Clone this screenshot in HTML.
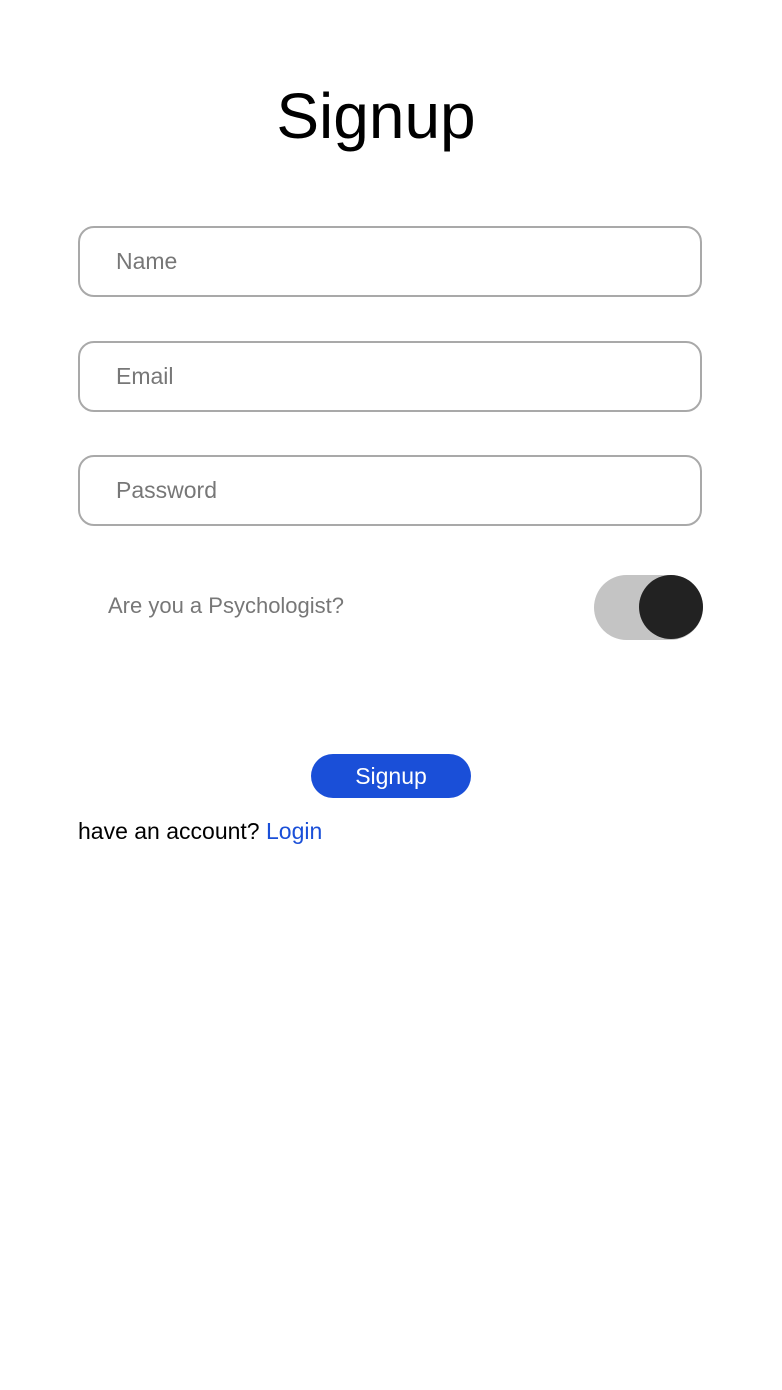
<!DOCTYPE html>
<html><head><style>
body{margin:0;width:782px;height:1390px;background:#fff;font-family:"Liberation Sans",sans-serif;position:relative;overflow:hidden}
.t{position:absolute;left:0;width:752px;text-align:center;top:76px;font-size:64px;color:#000;line-height:80px}
.in{position:absolute;left:78px;width:620px;height:67px;border:2px solid #a9a9a9;border-radius:16px;box-sizing:content-box}
.in span{position:absolute;left:36px;top:0;line-height:67px;font-size:23px;color:#777}
.lab{position:absolute;left:108px;top:592px;font-size:22px;color:#777;line-height:28px}
.track{position:absolute;left:594px;top:575px;width:109px;height:65px;border-radius:33px;background:#c4c4c4}
.knob{position:absolute;left:639px;top:575px;width:64px;height:64px;border-radius:50%;background:#222}
.btn{position:absolute;left:311px;top:754px;width:160px;height:44px;border-radius:22px;background:#1a4fd8;color:#fff;text-align:center;line-height:44px;font-size:23px}
.acc{position:absolute;left:78px;top:817px;font-size:23px;line-height:28px;color:#000}
.acc b{font-weight:normal;color:#1a4fd8}
</style></head><body>
<div class="t">Signup</div>
<div class="in" style="top:226px"><span>Name</span></div>
<div class="in" style="top:341px"><span>Email</span></div>
<div class="in" style="top:455px"><span>Password</span></div>
<div class="lab">Are you a Psychologist?</div>
<div class="track"></div><div class="knob"></div>
<div class="btn">Signup</div>
<div class="acc">have an account? <b>Login</b></div>
</body></html>
